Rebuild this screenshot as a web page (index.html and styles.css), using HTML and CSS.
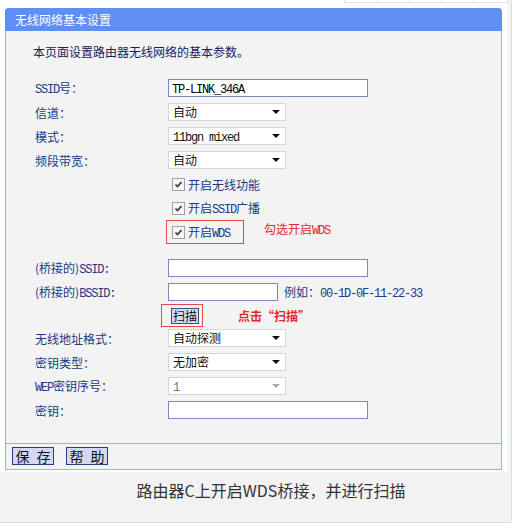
FILE: index.html
```html
<!DOCTYPE html>
<html lang="zh-CN">
<head>
    <meta charset="UTF-8">
    <title>无线网络基本设置</title>
    <link rel="stylesheet" href="styles.css">
</head>
<body>
    <div class="figure">
        <div class="shot">
            <div class="top-strip">
                <span></span><span></span><span></span><span></span><span></span>
            </div>

            <div class="panel">
                <div class="panel-title">无线网络基本设置</div>

                <div class="panel-body">
                    <p class="desc">本页面设置路由器无线网络的基本参数。</p>

                    <div class="form">
                        <div class="row">
                            <span class="label"><span class="en">SSID</span>号：</span>
                            <span class="input wide"><span class="en">TP-LINK_346A</span></span>
                        </div>
                        <div class="row">
                            <span class="label">信道：</span>
                            <span class="select">自动</span>
                        </div>
                        <div class="row">
                            <span class="label">模式：</span>
                            <span class="select"><span class="en">11bgn mixed</span></span>
                        </div>
                        <div class="row">
                            <span class="label">频段带宽：</span>
                            <span class="select">自动</span>
                        </div>
                        <div class="row">
                            <span class="label"></span>
                            <span class="check"></span>
                            <span class="check-text">开启无线功能</span>
                        </div>
                        <div class="row">
                            <span class="label"></span>
                            <span class="check"></span>
                            <span class="check-text">开启<span class="en">SSID</span>广播</span>
                        </div>
                        <div class="row">
                            <span class="label"></span>
                            <span class="mark mark-wds">
                                <span class="check"></span>
                                <span class="check-text">开启<span class="en">WDS</span></span>
                            </span>
                            <span class="note note-wds">勾选开启<span class="en">WDS</span></span>
                        </div>

                        <div class="row spaced">
                            <span class="label">(桥接的)<span class="en">SSID:</span></span>
                            <span class="input wide"></span>
                        </div>
                        <div class="row">
                            <span class="label">(桥接的)<span class="en">BSSID:</span></span>
                            <span class="input short"></span>
                            <span class="hint">例如：<span class="en">00-1D-0F-11-22-33</span></span>
                        </div>
                        <div class="row row-scan">
                            <span class="label"></span>
                            <span class="mark mark-scan"><span class="btn-small">扫描</span></span>
                            <span class="note note-scan">点击“扫描”</span>
                        </div>
                        <div class="row">
                            <span class="label">无线地址格式：</span>
                            <span class="select">自动探测</span>
                        </div>
                        <div class="row">
                            <span class="label">密钥类型：</span>
                            <span class="select">无加密</span>
                        </div>
                        <div class="row">
                            <span class="label"><span class="en">WEP</span>密钥序号：</span>
                            <span class="select disabled"><span class="en">1</span></span>
                        </div>
                        <div class="row">
                            <span class="label">密钥：</span>
                            <span class="input wide"></span>
                        </div>
                    </div>
                </div>

                <div class="panel-foot">
                    <span class="btn">保 存</span>
                    <span class="btn">帮 助</span>
                </div>
            </div>
        </div>

        <div class="caption">路由器C上开启WDS桥接，并进行扫描</div>
    </div>
</body>
</html>
```

FILE: styles.css
```css
body {
    margin: 0;
    background: #fff;
    font-family: "Noto Sans CJK SC", sans-serif;
    font-size: 12px;
}
.figure {
    width: 512px;
    height: 523px;
    box-sizing: border-box;
    background: #f2f2f2;
    border-right: 1px solid #dcdcdc;
    border-bottom: 1px solid #dcdcdc;
    border-bottom-right-radius: 3px;
}
.shot {
    width: 508px;
    height: 472px;
    box-sizing: border-box;
    padding-left: 5px;
    background: #fff;
}
.top-strip {
    height: 8px;
    display: flex;
    align-items: flex-start;
    padding-left: 339px;
}
.top-strip span {
    width: 32px;
    height: 2px;
    border: 1px solid #e2e2e2;
    border-top: none;
    border-right: none;
}
.top-strip span:last-child {
    border-right: 1px solid #e2e2e2;
}

.panel {
    width: 497px;
    box-sizing: border-box;
    background: #f3f3f3;
    border: 1px solid #e2aa5c;
    border-top: none;
    border-radius: 4px 4px 0 0;
}
.panel-title {
    height: 23px;
    margin: 0 -1px;
    padding-left: 10px;
    line-height: 23px;
    color: #fff;
    background: #5e8ff5;
    border-radius: 4px 4px 0 0;
}
.panel-body {
    padding: 11px 0 21px 0;
}
.desc {
    margin: 0 0 14px 27px;
    line-height: 20px;
    color: #15225e;
}
.form {
    padding-left: 29px;
}
.row {
    display: flex;
    align-items: center;
    height: 24px;
}
.row.spaced {
    margin-top: 12px;
}
.row-scan {
    height: 22px;
    align-items: flex-start;
}
.label {
    width: 133px;
    flex: none;
    color: #203a86;
}
.en {
    font-family: "Liberation Mono", monospace;
    font-size: 12px;
    letter-spacing: -1.2px;
}

.input {
    height: 18px;
    box-sizing: border-box;
    padding-left: 3px;
    line-height: 16px;
    background: #fff;
    border: 1px solid #7b8bbd;
}
.input.wide { width: 200px; }
.input.short { width: 110px; }

.select {
    position: relative;
    width: 118px;
    height: 18px;
    box-sizing: border-box;
    padding-left: 4px;
    line-height: 16px;
    color: #111;
    background: #fff;
    border: 1px solid #d6d6d6;
}
.select::after {
    content: "";
    position: absolute;
    right: 5px;
    top: 6px;
    border-left: 4px solid transparent;
    border-right: 4px solid transparent;
    border-top: 4px solid #111;
}
.select.disabled { color: #777; }
.select.disabled::after { border-top-color: #aaa; }

.check {
    width: 13px;
    height: 13px;
    box-sizing: border-box;
    margin: 0 3px 0 4px;
    background: #f6f6f6 url("data:image/svg+xml;utf8,<svg xmlns='http://www.w3.org/2000/svg' width='11' height='11'><path d='M2.5 5.5 L4.5 7.5 L8.5 3' fill='none' stroke='%23333' stroke-width='1.6'/></svg>") center no-repeat;
    border: 1px solid #9ea3a8;
}
.check-text {
    color: #203a86;
}

.mark {
    display: flex;
    align-items: center;
    box-sizing: border-box;
    border: 1px solid #e24a4a;
}
.mark-wds {
    height: 24px;
    margin-left: -2px;
    padding: 0 13px 0 1px;
}
.mark-scan {
    height: 23px;
    margin-left: -7px;
    padding: 0 3px 0 9px;
}
.btn-small {
    width: 28px;
    height: 16px;
    box-sizing: border-box;
    line-height: 14px;
    text-align: center;
    color: #111;
    background: #d8dcf2;
    border: 1px solid #3c4a80;
}
.note {
    color: #e02b2b;
}
.note-wds {
    margin: 0 0 7px 20px;
}
.note-scan {
    align-self: center;
    margin-left: 35px;
    font-weight: bold;
}
.hint {
    margin-left: 6px;
    color: #203a86;
}

.panel-foot {
    display: flex;
    gap: 12px;
    height: 22px;
    padding: 3px 0 0 6px;
    border-top: 1px solid #e2aa5c;
}
.btn {
    width: 42px;
    height: 18px;
    box-sizing: border-box;
    line-height: 16px;
    text-align: center;
    font-size: 14px;
    word-spacing: 4px;
    color: #111;
    background: #d4d8f4;
    border: 1px solid #2c3a78;
}

.caption {
    padding: 8px 0 0 31px;
    line-height: 20px;
    font-size: 16px;
    text-align: center;
    color: #333;
}
```
